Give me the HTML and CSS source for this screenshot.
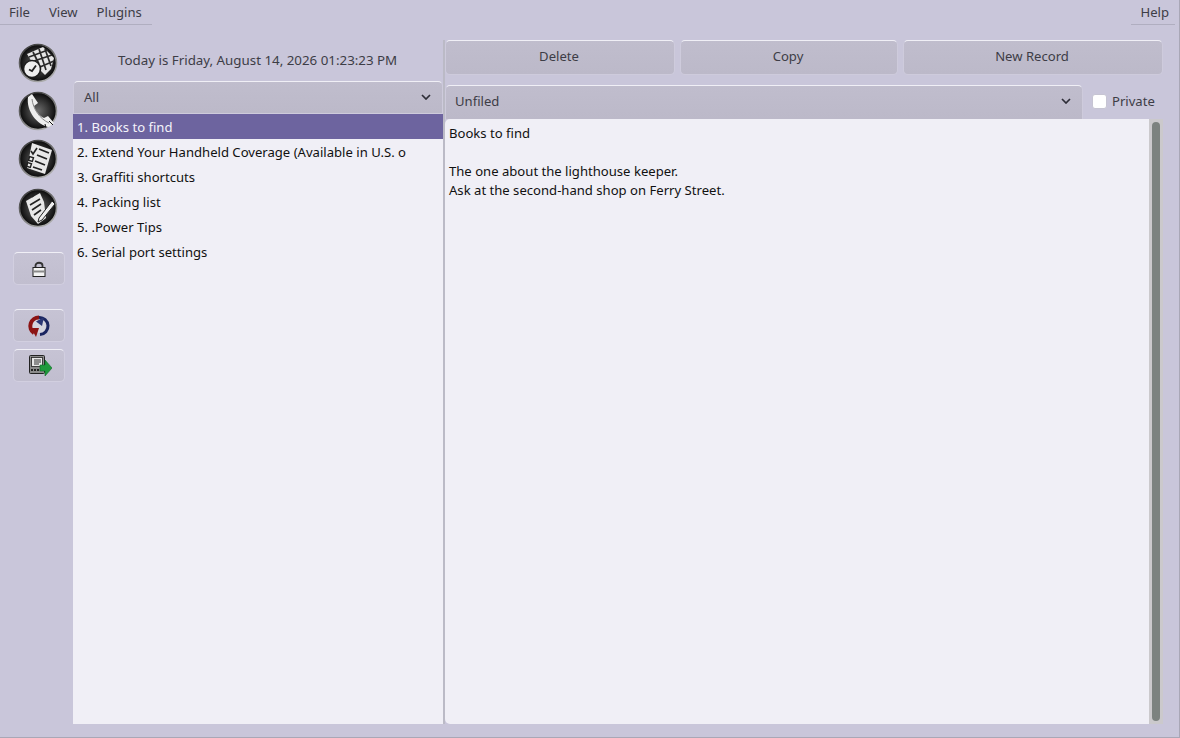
FILE: index.html
```html
<!DOCTYPE html>
<html lang="en">
<head>
  <meta charset="UTF-8" />
  <title>Memos</title>
  <link rel="stylesheet" href="styles.css">
</head>
<body>
  <svg class="defs" width="0" height="0">
    <defs>
      <radialGradient id="ball" cx="0.5" cy="0.5" r="0.52">
        <stop offset="0" stop-color="#6e6e6e"/>
        <stop offset="0.6" stop-color="#303030"/>
        <stop offset="1" stop-color="#050505"/>
      </radialGradient>
      <linearGradient id="rim" x1="0.2" y1="0" x2="0.8" y2="1">
        <stop offset="0" stop-color="#3a3a3a"/>
        <stop offset="1" stop-color="#b4b4b4"/>
      </linearGradient>
    </defs>
  </svg>

  <div class="menubar">
    <div class="menu-left">
      <span class="menu-item">File</span>
      <span class="menu-item">View</span>
      <span class="menu-item">Plugins</span>
    </div>
    <div class="menu-right">
      <span class="menu-item">Help</span>
    </div>
  </div>

  <div class="main">
    <div class="rail">
      <!-- datebook -->
      <svg class="app-icon" width="40" height="40" viewBox="0 0 40 40">
        <circle cx="20" cy="20" r="18.5" fill="url(#ball)" stroke="url(#rim)" stroke-width="1.6"/>
        <path d="M9 11 L25 4 L36 15 L33 26 L27 32 L14 19 Z" fill="#e6e6e6"/>
        <path d="M15 9 L21 21 M21 6 L28 27 M27 6 L33 23 M11 14 L30 7 M13 19 L34 12 M22 24 L36 18" stroke="#2a2a2a" stroke-width="1.7" fill="none"/>
        <circle cx="14" cy="26" r="8.5" fill="#eee" stroke="#1c1c1c" stroke-width="1.6"/>
        <path d="M11 26.5 L14 28 L18 22.5" stroke="#222" stroke-width="1.8" fill="none"/>
      </svg>
      <!-- address -->
      <svg class="app-icon" width="40" height="40" viewBox="0 0 40 40">
        <circle cx="20" cy="20" r="18.5" fill="url(#ball)" stroke="url(#rim)" stroke-width="1.6"/>
        <path d="M10 6 L14 3 L20 12 L16 15 C18 21 22 25 26 27 L30 25 L36 32 L31 36 C19 34 8 20 10 6 Z" fill="#eee"/>
        <path d="M14 8 C15 18 22 28 31 32" stroke="#888" stroke-width="1" fill="none"/>
        <path d="M27 33 L28 37 M31 30 L35 34" stroke="#111" stroke-width="1"/>
      </svg>
      <!-- todo -->
      <svg class="app-icon" width="40" height="40" viewBox="0 0 40 40">
        <circle cx="20" cy="20" r="18.5" fill="url(#ball)" stroke="url(#rim)" stroke-width="1.6"/>
        <path d="M14 4 L34 11 L27 35 L9 29 Z" fill="#e8e8e8"/>
        <path d="M21 10 L31 14 M19 16 L29 20 M17 22 L27 26 M15 28 L24 31" stroke="#222" stroke-width="1.8" fill="none"/>
        <path d="M13 12 L15 15 L19 9" stroke="#222" stroke-width="1.6" fill="none"/>
        <rect x="11" y="18" width="4" height="4" fill="none" stroke="#222" stroke-width="1.4" transform="rotate(17 13 20)"/>
        <rect x="9" y="24" width="4" height="4" fill="none" stroke="#222" stroke-width="1.4" transform="rotate(17 11 26)"/>
      </svg>
      <!-- memo -->
      <svg class="app-icon app-icon-last" width="40" height="40" viewBox="0 0 40 40">
        <circle cx="20" cy="20" r="18.5" fill="url(#ball)" stroke="url(#rim)" stroke-width="1.6"/>
        <path d="M8 13 L22 5 L26 14 L28 30 L20 36 L13 28 Z" fill="#e8e8e8"/>
        <path d="M10 10 L14 6 M14 9 L18 5 M12 17 L22 11 M14 22 L23 16 M16 27 L23 22" stroke="#222" stroke-width="1.6" fill="none"/>
        <path d="M21 30 L34 13 L37 16 L24 32 L20 34 Z" fill="#eee" stroke="#222" stroke-width="1"/>
      </svg>

      <button class="rail-btn rail-btn-lock">
        <svg width="14" height="16" viewBox="0 0 14 16">
          <path d="M3.5 7 V4.5 C3.5 0.8 10.5 0.8 10.5 4.5 V7" fill="none" stroke="#333" stroke-width="1.8"/>
          <rect x="1" y="6.5" width="12" height="9" fill="#f4f4f4" stroke="#222"/>
          <path d="M1.5 10.5 H12.5" stroke="#8a8a8a" stroke-width="2"/>
        </svg>
      </button>
      <button class="rail-btn rail-btn-sync">
        <svg width="24" height="24" viewBox="0 0 24 24">
          <circle cx="12" cy="12" r="7" fill="#d4d4de"/>
          <path d="M12 3.5 A8.5 8.5 0 0 0 7 19" fill="none" stroke="#8c1414" stroke-width="4"/>
          <path d="M4 14 L12 14 L9 23 Z" fill="#8c1414"/>
          <path d="M12 3.5 A8.5 8.5 0 0 1 13 20.5" fill="none" stroke="#1a2560" stroke-width="3"/>
          <path d="M17 3 L9 7.5 L15 12 Z" fill="#2a3674"/>
        </svg>
      </button>
      <button class="rail-btn rail-btn-pda">
        <svg width="24" height="22" viewBox="0 0 24 22">
          <rect x="1.5" y="0.5" width="15" height="18" rx="1" fill="#8b8b8b" stroke="#222"/>
          <rect x="3.5" y="2.5" width="11" height="9" fill="#e8e8e8" stroke="#222" stroke-width="0.8"/>
          <path d="M6 5 H13 M6 7 H13 M6 9 H11" stroke="#333"/>
          <path d="M3 15 H15" stroke="#222" stroke-width="2" stroke-dasharray="2 1"/>
          <path d="M12 9 H17 V4 L24 12 L17 20 V15 H12 Z" fill="#1f9a3c" stroke="#0f6b27" stroke-width="0.6" transform="translate(0 1)"/>
        </svg>
      </button>
    </div>

    <div class="list-pane">
      <div class="today">Today is Friday, August 14, 2026 01:23:23 PM</div>
      <div class="select select-cat">
        <span>All</span>
        <svg class="chev" width="10" height="6" viewBox="0 0 10 6"><path d="M1 1 L5 5 L9 1" fill="none" stroke="#2e2e38" stroke-width="1.7"/></svg>
      </div>
      <div class="list">
        <div class="row selected">1. Books to find</div>
        <div class="row">2. Extend Your Handheld Coverage (Available in U.S. o</div>
        <div class="row">3. Graffiti shortcuts</div>
        <div class="row">4. Packing list</div>
        <div class="row">5. .Power Tips</div>
        <div class="row">6. Serial port settings</div>
      </div>
    </div>

    <div class="splitter"></div>

    <div class="detail-pane">
      <div class="actions">
        <button class="btn btn-delete">Delete</button>
        <button class="btn btn-copy">Copy</button>
        <button class="btn btn-new">New Record</button>
      </div>
      <div class="cat-row">
        <div class="select select-file">
          <span>Unfiled</span>
          <svg class="chev" width="10" height="6" viewBox="0 0 10 6"><path d="M1 1 L5 5 L9 1" fill="none" stroke="#2e2e38" stroke-width="1.7"/></svg>
        </div>
        <label class="private"><span class="check"></span>Private</label>
      </div>
      <div class="editor-wrap">
        <div class="editor">
          <div>Books to find</div>
          <div>&nbsp;</div>
          <div>The one about the lighthouse keeper.</div>
          <div>Ask at the second-hand shop on Ferry Street.</div>
        </div>
        <div class="scrollbar"><div class="thumb"></div></div>
      </div>
    </div>
  </div>
</body>
</html>
```

FILE: styles.css
```css
* {
  box-sizing: border-box;
}
body {
  margin: 0;
  display: flex;
  flex-direction: column;
  height: 738px;
  overflow: hidden;
  background-color: #c9c6da;
  border-right: 1px solid #a9a7b6;
  border-bottom: 1px solid #a9a7b6;
  font-family: "Noto Sans", sans-serif;
  font-size: 13.1px;
  color: #111;
}
.defs {
  position: absolute;
}
.menubar {
  display: flex;
  justify-content: space-between;
  height: 25px;
  padding-right: 4px;
  color: #3d3d46;
}
.menu-left, .menu-right {
  display: flex;
  height: 25px;
  border-bottom: 1px solid #b0aec0;
}
.menu-item {
  padding: 3px 10px 0 9px;
}
.menu-right .menu-item {
  padding-right: 6px;
}
.main {
  flex: 1;
  display: flex;
  padding-bottom: 13px;
}
.rail {
  width: 73px;
  display: flex;
  flex-direction: column;
  align-items: center;
  padding-top: 18px;
  padding-left: 4px;
}
.app-icon {
  display: block;
  margin-bottom: 8px;
  margin-right: 1px;
}
.app-icon-last {
  margin-top: 1px;
}
.rail-btn {
  width: 52px;
  height: 33px;
  margin-bottom: 7px;
  padding: 0;
  display: flex;
  align-items: center;
  justify-content: center;
  background: linear-gradient(#c6c3d4, #c1becf);
  border: 1px solid #d2cfe0;
  border-top-color: #f0eff6;
  border-radius: 5px;
}
.rail-btn-lock {
  margin-top: 16px;
}
.rail-btn-sync {
  margin-top: 17px;
}
.rail-btn-pda svg {
  margin-left: 3px;
}
.list-pane {
  width: 370px;
  display: flex;
  flex-direction: column;
}
.today {
  height: 56px;
  padding-top: 26px;
  padding-left: 45px;
  font-size: 13.33px;
  color: #3d3d46;
}
.select {
  display: flex;
  align-items: center;
  justify-content: space-between;
  background: linear-gradient(#c0bdcd, #bcb9c9);
  border: 1px solid #cecbdc;
  border-top-color: #f0eff6;
  border-radius: 5px 5px 0 0;
  color: #3d3d46;
}
.select-cat {
  height: 33px;
  padding: 0 11px 2px 10px;
}
.list {
  flex: 1;
  background-color: #f0eff6;
}
.row {
  height: 25px;
  padding: 1px 4px 0;
  line-height: 24px;
  white-space: nowrap;
}
.row.selected {
  background-color: #6d649f;
  color: #f4f3fa;
}
.splitter {
  width: 2px;
  margin-top: 15px;
  background-color: #bbbac6;
}
.detail-pane {
  flex: 1;
  display: flex;
  flex-direction: column;
  padding-right: 16px;
}
.actions {
  display: flex;
  gap: 5px;
  margin-top: 15px;
}
.btn {
  height: 35px;
  padding: 0 2px 3px 0;
  background: linear-gradient(#c0bdcd, #bcb9c9);
  border: 1px solid #cecbdc;
  border-top-color: #f0eff6;
  border-radius: 5px;
  font-family: inherit;
  font-size: 13.1px;
  color: #3d3d46;
}
.btn-delete {
  width: 230px;
}
.btn-copy {
  width: 218px;
}
.btn-new {
  width: 260px;
}
.cat-row {
  display: flex;
  align-items: center;
  height: 35px;
  margin-top: 10px;
}
.select-file {
  width: 638px;
  height: 35px;
  padding: 0 11px 3px 9px;
}
.private {
  display: flex;
  align-items: center;
  margin-left: 9px;
  padding-bottom: 3px;
  color: #3d3d46;
  white-space: nowrap;
}
.check {
  width: 15px;
  height: 15px;
  margin-right: 5px;
  background-color: #fff;
  border: 1px solid #c6c4d2;
  border-radius: 3px;
}
.editor-wrap {
  flex: 1;
  display: flex;
  margin-top: -1px;
}
.editor {
  flex: 1;
  padding: 5px 4px 0;
  line-height: 19px;
  background-color: #f0eff6;
  border-radius: 5px 0 0 5px;
}
.scrollbar {
  width: 14px;
  padding: 3px;
  background-color: #cbc9cc;
}
.thumb {
  height: 100%;
  background-color: #7c827f;
  border-radius: 4px;
}
```
